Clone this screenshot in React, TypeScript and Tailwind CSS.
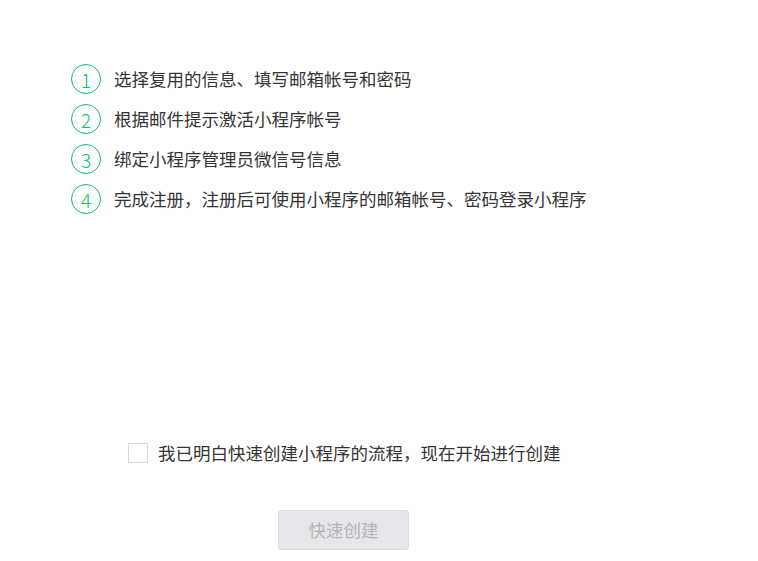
import React from "react";

const steps = [
  "选择复用的信息、填写邮箱帐号和密码",
  "根据邮件提示激活小程序帐号",
  "绑定小程序管理员微信号信息",
  "完成注册，注册后可使用小程序的邮箱帐号、密码登录小程序",
];

export default function App() {
  return (
    <div
      className="w-[758px] h-[561px] bg-white text-[#353535] overflow-hidden"
      style={{ fontFamily: '"Noto Sans CJK SC", "Noto Sans", sans-serif' }}
    >
      {/* Steps */}
      <ul className="flex flex-col gap-[10px] pt-[64px] pl-[71px]">
        {steps.map((text, i) => (
          <li key={i} className="flex items-center h-[30px]">
            <span className="flex h-[30px] w-[30px] shrink-0 items-center justify-center rounded-full border border-[#07c160] text-[19px] font-light leading-none text-[#07c160]">
              {i + 1}
            </span>
            <span className="ml-[13px] text-[17.5px] leading-none">{text}</span>
          </li>
        ))}
      </ul>

      {/* Agreement */}
      <label className="mt-[229px] ml-[128px] flex items-center h-[20px]">
        <span className="h-[20px] w-[20px] shrink-0 border border-[#d9d9d9] bg-white" />
        <span className="ml-[10px] text-[17.5px] leading-none">
          我已明白快速创建小程序的流程，现在开始进行创建
        </span>
      </label>

      {/* Submit */}
      <div className="mt-[47px] ml-[278px]">
        <button
          disabled
          className="h-[40px] w-[131px] rounded-[3px] border border-[#dcdce0] bg-[#e7e7eb] text-[17.5px] text-[#b3b3b3]"
        >
          快速创建
        </button>
      </div>
    </div>
  );
}
